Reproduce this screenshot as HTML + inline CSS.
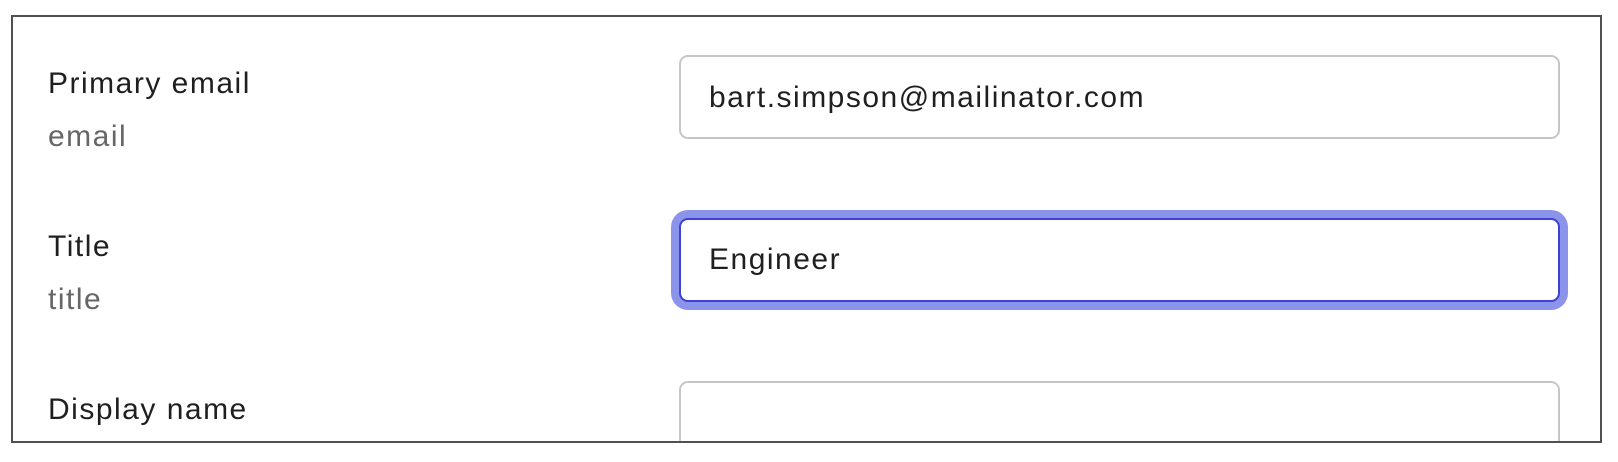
<!DOCTYPE html>
<html><head><style>
html,body{margin:0;padding:0;background:#fff;width:1618px;height:462px;overflow:hidden;font-family:"Liberation Sans",sans-serif;}
.frame{position:absolute;left:11px;top:15px;width:1587px;height:424px;border:2.5px solid #505050;overflow:hidden;}
.t{position:absolute;font-size:30px;color:#1f1f1f;letter-spacing:1.5px;line-height:1;}
.s{color:#666;}
.in{position:absolute;left:666px;width:881px;border:2px solid #c6c6c6;border-radius:9px;box-sizing:border-box;background:#fff;}
.val{position:absolute;left:28px;font-size:30px;color:#1f1f1f;letter-spacing:1.5px;line-height:1;}
.focus{border:2px solid #3b42d4;box-shadow:0 0 0 8px #8b94ea;}
</style></head><body>
<div class="frame">
<div class="t" style="left:35px;top:52px">Primary email</div>
<div class="t s" style="left:35px;top:105px">email</div>
<div class="t" style="left:35px;top:215px">Title</div>
<div class="t s" style="left:35px;top:268px">title</div>
<div class="t" style="left:35px;top:378px">Display name</div>
<div class="in" style="top:38px;height:84px"><div class="val" style="top:26px">bart.simpson@mailinator.com</div></div>
<div class="in focus" style="top:201px;height:84px"><div class="val" style="top:25px">Engineer</div></div>
<div class="in" style="top:364px;height:100px"></div>
</div>
</body></html>
